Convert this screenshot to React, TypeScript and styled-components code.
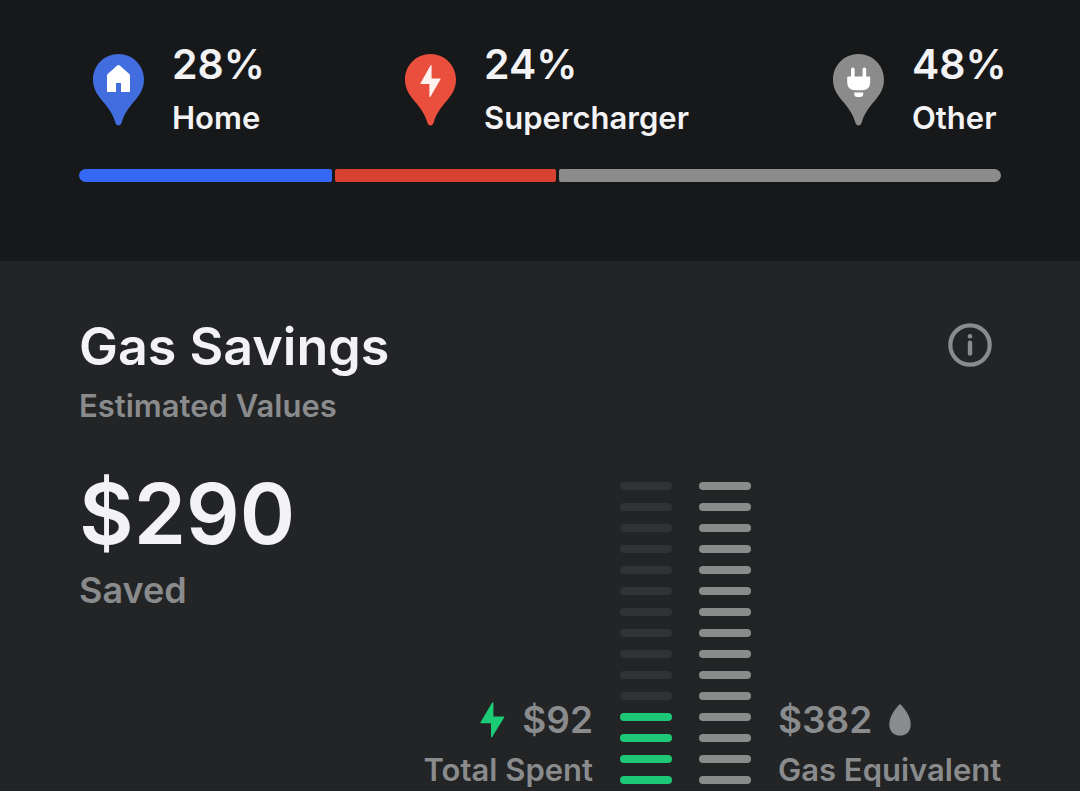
import React from "react";
import styled, { createGlobalStyle } from "styled-components";

const GlobalStyle = createGlobalStyle`
  *, *::before, *::after { box-sizing: border-box; }
  body {
    margin: 0;
    background: #222425;
    color: #f3f3f5;
    font-family: Inter, "Liberation Sans", sans-serif;
    font-weight: 600;
  }
  h2, p, ul { margin: 0; padding: 0; font-weight: inherit; }
`;

const muted = "#8a8b8d";

const Page = styled.main`
  background: #222425;
  overflow: hidden;
`;

const Sources = styled.section`
  padding: 36px 79px 79px;
  background: #17181a;
`;

const SourceList = styled.ul`
  display: flex;
  justify-content: space-between;
  margin-bottom: 31px;
  list-style: none;
`;

const Source = styled.li`
  display: flex;
  gap: 28px;
  padding-left: 14px;
`;

const PinIcon = styled.svg`
  flex: none;
  width: 51px;
  height: 72px;
  margin-top: 18px;
`;

const Readout = styled.div<{ $compact: boolean }>`
  width: ${(p) => (p.$compact ? "89px" : "auto")};
  white-space: nowrap;
`;

const Percent = styled.p`
  font-size: 41px;
  line-height: 56px;
`;

const SourceName = styled.p`
  margin-top: 6px;
  font-size: 31px;
  line-height: 40px;
`;

const Bar = styled.div`
  display: flex;
  gap: 3px;
  height: 13px;
  border-radius: 7px;
  overflow: hidden;
`;

const Segment = styled.span<{ $share: number; $color: string }>`
  flex: ${(p) => p.$share} 1 0;
  border-radius: 2px;
  background: ${(p) => p.$color};
`;

const Savings = styled.section`
  padding: 54px 79px 7px;
`;

const Header = styled.header`
  display: flex;
  align-items: flex-start;
  justify-content: space-between;
`;

const Title = styled.h2`
  font-size: 52px;
  line-height: 64px;
`;

const Subtitle = styled.p`
  margin-top: 7px;
  color: ${muted};
  font-size: 31px;
  line-height: 40px;
`;

const InfoButton = styled.button`
  display: flex;
  margin: 8px 9px 0 0;
  padding: 0;
  border: 0;
  background: none;
  color: ${muted};
  cursor: pointer;
`;

const Body = styled.div`
  display: flex;
  justify-content: space-between;
  margin-top: 38px;
`;

const Total = styled.p`
  font-size: 84px;
  line-height: 100px;
`;

const TotalLabel = styled.p`
  margin-top: 4px;
  color: ${muted};
  font-size: 36px;
  line-height: 44px;
`;

const Chart = styled.div`
  display: grid;
  grid-template-columns: auto 52px 52px 223px;
  gap: 27px;
  align-items: end;
  padding-top: 18px;
`;

const Ticks = styled.div`
  display: flex;
  flex-direction: column;
  gap: 13px;
`;

const Tick = styled.span<{ $color: string }>`
  height: 8px;
  border-radius: 4px;
  background: ${(p) => p.$color};
`;

const Label = styled.div<{ $end?: boolean }>`
  display: flex;
  flex-direction: column;
  align-items: ${(p) => (p.$end ? "flex-end" : "flex-start")};
  color: ${muted};
  white-space: nowrap;
`;

const Amount = styled.p`
  display: flex;
  align-items: center;
  gap: 17px;
  font-size: 37px;
  line-height: 44px;
`;

const Caption = styled.p`
  margin-top: 8px;
  margin-bottom: -6px;
  font-size: 31px;
  line-height: 40px;
`;

const HomeGlyph = () => (
  <path
    d="M24.2 11.6Q25.5 10.6 26.8 11.6L36.3 20Q37 20.7 37 21.6V37.2Q37 38 36.2 38H28V29H23V38H14.8Q14 38 14 37.2V21.6Q14 20.7 14.7 20Z"
    fill="#fff"
  />
);

const BoltGlyph = () => (
  <path
    d="M25.6 11.2L15.5 29.2Q15 30 16 30H24.4V42.6Q24.8 43.6 25.6 42.6L35.5 25.3Q36 24.4 35 24.4H26.6V11.6Q26.4 10.6 25.6 11.2Z"
    fill="#fff1ef"
  />
);

const PlugGlyph = () => (
  <g fill="#fff">
    <path d="M18 15.2Q18 13.6 19.8 13.6T21.6 15.2V22.4H29.6V15.2Q29.6 13.6 31.4 13.6T33.2 15.2V22.4H36Q37.2 22.4 37.2 23.6V28Q37.2 36.2 29 36.2H22.4Q14.2 36.2 14.2 28V23.6Q14.2 22.4 15.4 22.4H18Z" />
    <path d="M21.2 38.4H30.2V40Q30.2 43 27.2 43H24.2Q21.2 43 21.2 40Z" />
  </g>
);

const sources = [
  { name: "Home", percent: "28%", share: 276, pin: "#416ddf", bar: "#3569f5", compact: true, Glyph: HomeGlyph },
  { name: "Supercharger", percent: "24%", share: 242, pin: "#ea4f3d", bar: "#d8412f", compact: false, Glyph: BoltGlyph },
  { name: "Other", percent: "48%", share: 482, pin: "#8a8b8a", bar: "#8a8b8a", compact: true, Glyph: PlugGlyph },
];

const TICK_COUNT = 15;
const SPENT_TICKS = 4;
const tickIndexes = Array.from({ length: TICK_COUNT }, (_, i) => i);

export default function App() {
  return (
    <Page>
      <GlobalStyle />
      <Sources aria-label="Charging sources">
        <SourceList>
          {sources.map(({ name, percent, pin, compact, Glyph }) => (
            <Source key={name}>
              <PinIcon viewBox="0 0 51 72" aria-hidden="true">
                <path
                  d="M25.5 0C39.6 0 51 11.2 51 25.6C51 34 47.5 40 42 46.5C34.5 55 30.8 61 28.7 68.5C28 70.6 27 71.5 25.5 71.5C24 71.5 23 70.6 22.3 68.5C20.2 61 16.5 55 9 46.5C3.5 40 0 34 0 25.6C0 11.2 11.4 0 25.5 0Z"
                  fill={pin}
                />
                <Glyph />
              </PinIcon>
              <Readout $compact={compact}>
                <Percent>{percent}</Percent>
                <SourceName>{name}</SourceName>
              </Readout>
            </Source>
          ))}
        </SourceList>
        <Bar>
          {sources.map(({ name, share, bar }) => (
            <Segment key={name} $share={share} $color={bar} />
          ))}
        </Bar>
      </Sources>

      <Savings>
        <Header>
          <div>
            <Title>Gas Savings</Title>
            <Subtitle>Estimated Values</Subtitle>
          </div>
          <InfoButton type="button" aria-label="About gas savings">
            <svg width="44" height="44" viewBox="0 0 44 44" aria-hidden="true">
              <circle cx="22" cy="22" r="19.7" fill="none" stroke="currentColor" strokeWidth="4.2" />
              <circle cx="22" cy="13.2" r="2.3" fill="currentColor" />
              <path d="M22 19.8V30.6" stroke="currentColor" strokeWidth="4.4" strokeLinecap="round" />
            </svg>
          </InfoButton>
        </Header>
        <Body>
          <div>
            <Total>$290</Total>
            <TotalLabel>Saved</TotalLabel>
          </div>
          <Chart>
            <Label $end>
              <Amount>
                <svg width="25" height="36" viewBox="0 0 25 36" aria-hidden="true">
                  <path
                    d="M12.2 0.6L0.5 20.3Q0 21.2 1 21.2H11V35Q11.3 36.2 12.2 35L24.2 15.4Q24.7 14.5 23.7 14.5H13.4V1Q13.1 -0.4 12.2 0.6Z"
                    fill="#1ccb76"
                  />
                </svg>
                $92
              </Amount>
              <Caption>Total Spent</Caption>
            </Label>
            <Ticks>
              {tickIndexes.map((i) => (
                <Tick key={i} $color={i >= TICK_COUNT - SPENT_TICKS ? "#1dc977" : "#313233"} />
              ))}
            </Ticks>
            <Ticks>
              {tickIndexes.map((i) => (
                <Tick key={i} $color="#8a8c8c" />
              ))}
            </Ticks>
            <Label>
              <Amount>
                $382
                <svg width="22" height="32" viewBox="0 0 22 32" aria-hidden="true">
                  <path
                    d="M10 0.8Q11 -0.3 12 0.8C17 6.5 21.7 13 21.7 20.5C21.7 27.5 17 31.6 11 31.6S0.3 27.5 0.3 20.5C0.3 13 5 6.5 10 0.8Z"
                    fill="#8a8b8d"
                  />
                </svg>
              </Amount>
              <Caption>Gas Equivalent</Caption>
            </Label>
          </Chart>
        </Body>
      </Savings>
    </Page>
  );
}
